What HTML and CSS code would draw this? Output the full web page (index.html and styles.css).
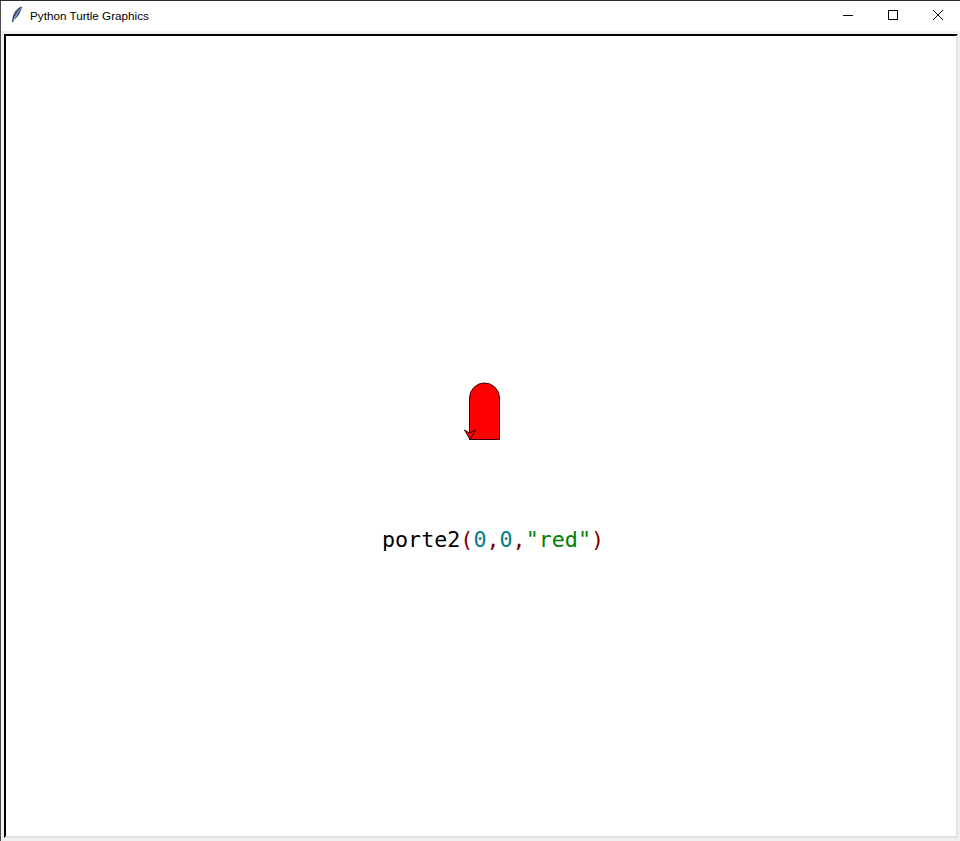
FILE: index.html
```html
<!DOCTYPE html>
<html>
<head>
<meta charset="utf-8">
<link rel="stylesheet" href="styles.css">
</head>
<body>
<div class="window">
  <div class="titlebar">
    <svg class="app-icon" width="12" height="18" viewBox="0 0 12 18">
      <path d="M10.5 1 C7 2 3 6 2 12 L1.5 16 L3 13 C6 12 9 7 10.5 1 Z" fill="#3b5f8f" stroke="#1d2f47" stroke-width="0.8"/>
      <path d="M9.5 2.5 L2.5 14" stroke="#c9d6e6" stroke-width="0.7"/>
    </svg>
    <span class="title">Python Turtle Graphics</span>
    <div class="controls">
      <div class="ctl">
        <svg width="12" height="12" viewBox="0 0 12 12"><path d="M1 6.5 H11" stroke="#000" stroke-width="1"/></svg>
      </div>
      <div class="ctl">
        <svg width="12" height="12" viewBox="0 0 12 12"><rect x="1.5" y="1.5" width="9" height="9" fill="none" stroke="#000" stroke-width="1"/></svg>
      </div>
      <div class="ctl">
        <svg width="12" height="12" viewBox="0 0 12 12"><path d="M1 1 L11 11 M11 1 L1 11" stroke="#000" stroke-width="1"/></svg>
      </div>
    </div>
  </div>
  <div class="client">
    <div class="canvas">
      <svg class="turtle" width="40" height="60" viewBox="460 380 40 60">
        <path d="M469.5 439.5 V398 A15 15 0 0 1 499.5 398 V439.5 Z" fill="#ff0000" stroke="#3a0000" stroke-width="1"/>
        <path d="M464.5 430 L469.5 433 L475.5 430 L470 439.5 Z" fill="#ff0000" stroke="#3a0000" stroke-width="1"/>
      </svg>
      <div class="code"><span class="fn">porte2</span><span class="p">(</span><span class="n">0</span><span class="p">,</span><span class="n">0</span><span class="p">,</span><span class="s">"red"</span><span class="p">)</span></div>
    </div>
  </div>
</div>
</body>
</html>
```

FILE: styles.css
```css
html, body {
  margin: 0;
  padding: 0;
  background: #f0f0f0;
}
.window {
  width: 960px;
  height: 841px;
  box-sizing: border-box;
  border-top: 1px solid #2b2b2b;
  border-left: 1px solid #4a4a4a;
  display: flex;
  flex-direction: column;
  overflow: hidden;
}
.titlebar {
  height: 30px;
  background: #ffffff;
  display: flex;
  align-items: center;
  flex-shrink: 0;
}
.app-icon {
  margin-left: 10px;
  margin-top: -2px;
}
.title {
  margin-left: 7px;
  font-family: "Liberation Sans", Arial, sans-serif;
  font-size: 11.7px;
  color: #000;
  margin-top: -1px;
}
.controls {
  margin-left: auto;
  display: flex;
}
.ctl {
  width: 45px;
  height: 30px;
  display: flex;
  align-items: center;
  justify-content: center;
}
.ctl svg {
  margin-top: -2px;
}
.client {
  flex: 1;
  background: #f0f0f0;
  padding: 3px 2px 3px 3px;
  display: flex;
}
.canvas {
  flex: 1;
  position: relative;
  background: #ffffff;
  border-top: 2px solid #000;
  border-left: 2px solid #000;
  border-right: 2px solid #e3e3e3;
  border-bottom: 2px solid #e3e3e3;
}
.turtle {
  position: absolute;
  left: 454px;
  top: 344px;
}
.code {
  position: absolute;
  left: 376px;
  top: 490px;
  font-family: "DejaVu Sans Mono", "Liberation Mono", monospace;
  font-size: 21.7px;
  line-height: 28px;
  white-space: pre;
}
.fn { color: #000000; }
.p { color: #7f0000; }
.n { color: #00808a; }
.s { color: #008000; }
```
